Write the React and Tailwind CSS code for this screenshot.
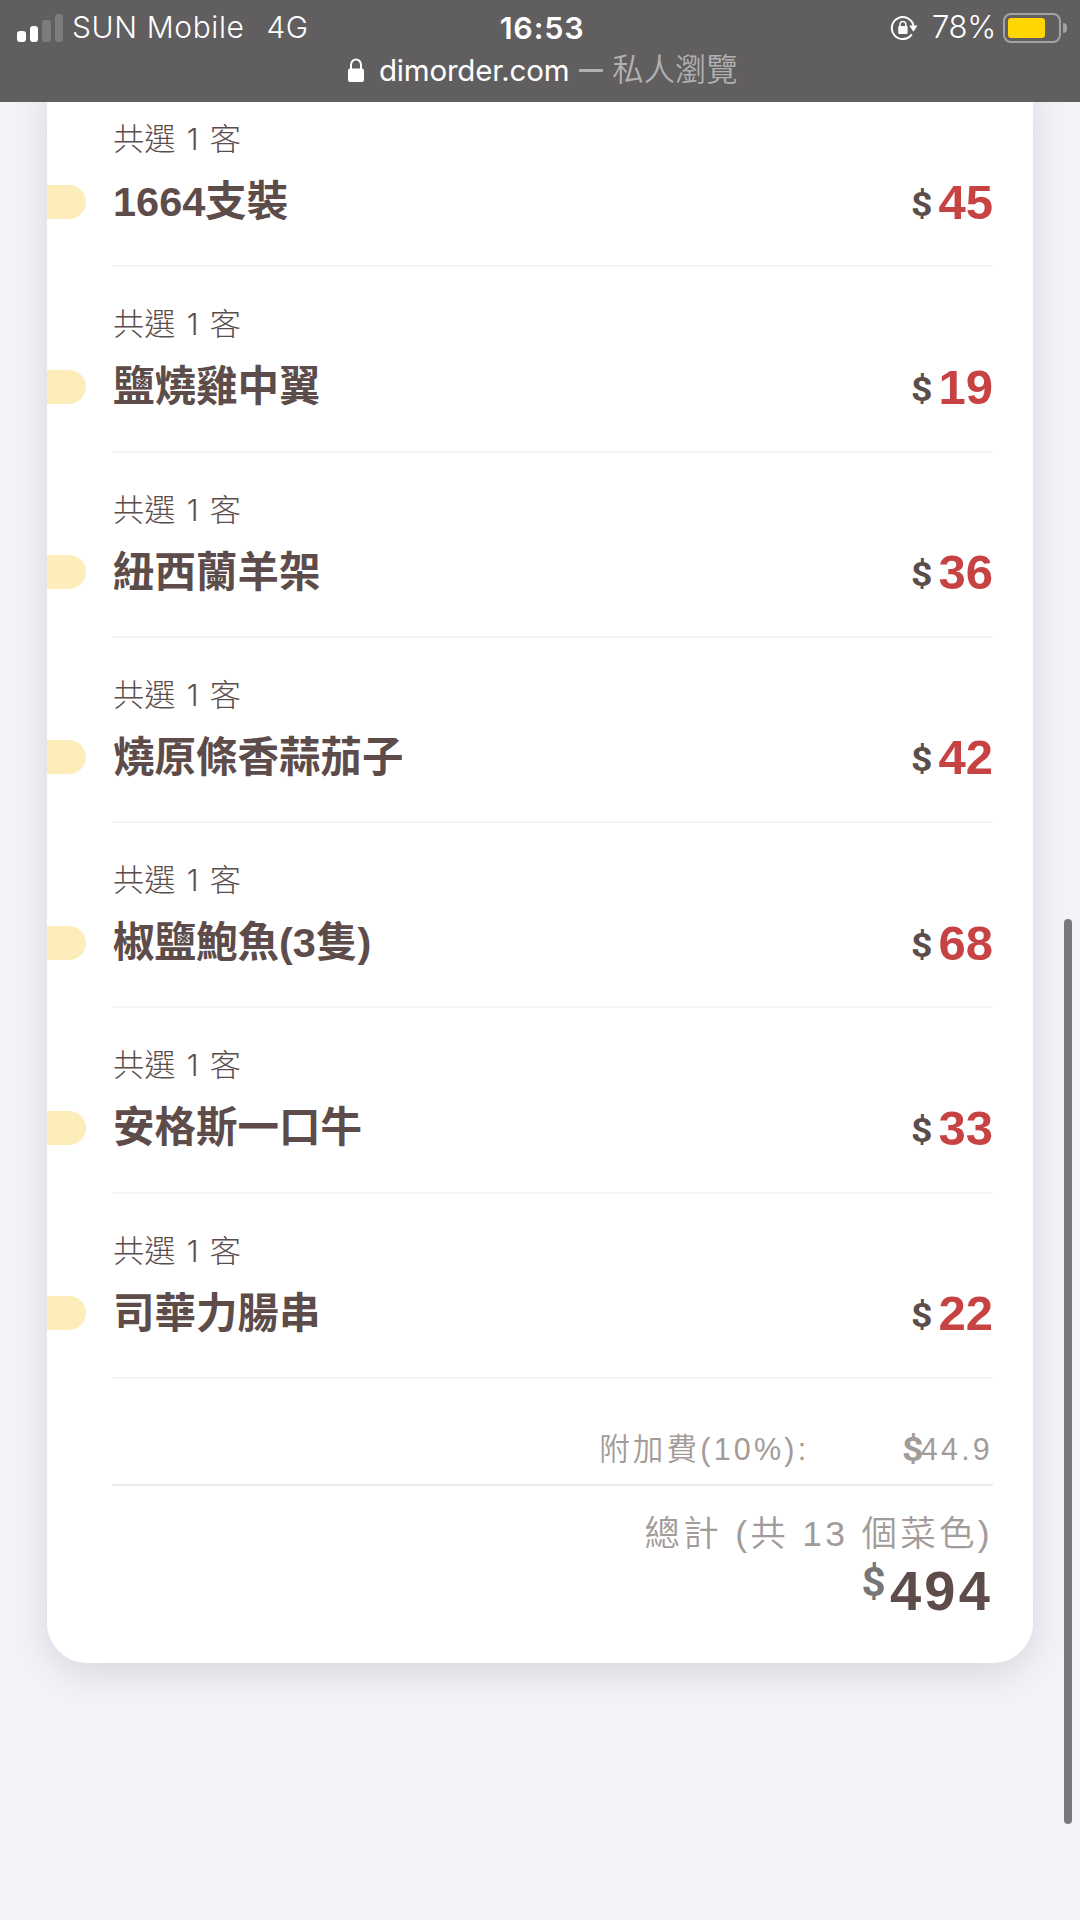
import React from "react";

const items = [
  { name: "1664支裝", price: 45 },
  { name: "鹽燒雞中翼", price: 19 },
  { name: "紐西蘭羊架", price: 36 },
  { name: "燒原條香蒜茄子", price: 42 },
  { name: "椒鹽鮑魚(3隻)", price: 68 },
  { name: "安格斯一口牛", price: 33 },
  { name: "司華力腸串", price: 22 },
];

const SignalBars = () => (
  <div className="flex items-end gap-1 h-7">
    <span className="w-[8.5px] h-[11px] rounded-[3px] bg-white"></span>
    <span className="w-[8.5px] h-4 rounded-[3px] bg-white"></span>
    <span className="w-[8.5px] h-[22px] rounded-[3px] bg-[#7d7c7c]"></span>
    <span className="w-[8.5px] h-7 rounded-[3px] bg-[#7d7c7c]"></span>
  </div>
);

const RotationLock = () => (
  <svg width="28" height="26" viewBox="0 0 28 26" fill="none">
    <path d="M21.8 19.4 A11 11 0 1 1 23.5 10.5" stroke="white" strokeWidth="2" />
    <path d="M19.3 10.5 H27.5 L23.4 16.8 Z" fill="white" />
    <rect x="8.2" y="11" width="9.4" height="8" rx="1.2" fill="white" />
    <path d="M10 11.5 V9.3 a2.9 2.9 0 0 1 5.8 0 V11.5" stroke="white" strokeWidth="1.5" />
  </svg>
);

const PadLock = () => (
  <svg width="16" height="24" viewBox="0 0 16 24" fill="none">
    <rect x="0" y="10.5" width="16" height="13.5" rx="2" fill="white" />
    <path d="M3 11.5 V6.8 a5 5.4 0 0 1 10 0 V11.5" stroke="white" strokeWidth="2" />
  </svg>
);

const Battery = () => (
  <div className="flex items-center gap-[2px]">
    <div className="w-[58px] h-[30px] rounded-[8px] border-2 border-[#a3a2a2] p-[3px]">
      <div className="w-[37px] h-5 rounded-[3px] bg-[#ffd502]"></div>
    </div>
    <div className="w-[4px] h-[10px] rounded-r-full bg-[#a3a2a2]"></div>
  </div>
);

const StatusBar = () => (
  <header className="relative z-10 h-[102px] bg-[#605e5f] text-white font-['Inter','Noto_Sans_CJK_TC',sans-serif]">
    <div className="grid grid-cols-3 items-center h-[55px] pl-[17px] pr-[13px]">
      <div className="flex items-center">
        <SignalBars />
        <span className="ml-[9px] text-[30px] tracking-[0.6px] font-[350] whitespace-pre">SUN Mobile</span>
        <span className="ml-[22px] text-[30px] font-[350] tracking-[0.5px]">4G</span>
      </div>
      <span className="text-center text-[30.5px] font-semibold tracking-[0.8px]">16:53</span>
      <div className="flex items-center justify-end">
        <RotationLock />
        <span className="ml-[14px] mr-[7px] text-[31px] font-[350] tracking-[-0.3px]">78%</span>
        <Battery />
      </div>
    </div>
    <div className="flex items-center h-[30px] pl-[348px] text-[29.5px]">
      <PadLock />
      <span className="ml-[15px] tracking-[-0.2px]">dimorder.com</span>
      <span className="ml-[10px] w-6 h-[3px] bg-[#b1b0b0]"></span>
      <span className="ml-[9px] text-[31.3px] font-[350] text-[#b1b0b0]">私人瀏覽</span>
    </div>
  </header>
);

const OrderRow = ({ name, price }) => (
  <div className="h-[185.3px] pt-[38px]">
    <div className="pl-[66px] h-10 leading-10 text-[31.2px] font-light text-[#5b4d4b]">
      共選 <span className="inline-block w-[17px] text-center text-[30px] font-['Inter',sans-serif]">1</span> 客
    </div>
    <div className="mt-[18px] h-[50px] flex items-center">
      <span className="-mt-[1px] w-[39px] h-[34px] rounded-r-full bg-[#fcedbb]"></span>
      <span className="ml-[27px] text-[41.5px] leading-[50px] font-bold text-[#5d4c4a]">{name}</span>
      <span className="-mt-[1px] ml-auto mr-[40px] flex items-center leading-[50px] font-bold">
        <span className="mr-[7px] mt-[4px] scale-x-110 text-[34px] text-[#5b4d4b] font-['Roboto',sans-serif]">$</span>
        <span className="text-[49px] text-[#c74343]">{price}</span>
      </span>
    </div>
    <div className="mt-[38.3px] ml-[65px] mr-[40px] h-[2px] bg-[#f4f4f4]"></div>
  </div>
);

const App = () => {
  return (
    <div className="relative h-[1920px] overflow-hidden bg-[#f4f3f9] font-['Liberation_Sans','Noto_Sans_CJK_TC',sans-serif]">
      <StatusBar />

      <main className="-mt-[21px] ml-[47px] mr-[47px] h-[1582px] rounded-b-[40px] bg-white shadow-[0_10px_40px_rgba(0,0,0,0.12)]">
        {items.map((item) => (
          <OrderRow key={item.name} name={item.name} price={item.price} />
        ))}

        {/* Surcharge */}
        <div className="ml-[65px] mr-[40px] h-[108px] pt-[51px] border-b-2 border-[#e9e9e9] flex justify-end text-[30.5px] leading-10 tracking-[3.2px] text-[#a39b98]">
          <span className="font-[350]">附加費(10%):</span>
          <span className="ml-[94px] -mr-[2px] scale-x-110 font-bold tracking-normal font-['Roboto',sans-serif] text-[34px]">$</span>
          <span>44.9</span>
        </div>

        {/* Total */}
        <div className="mr-[40px] pt-[24px] text-right text-[#a39b98]">
          <div className="h-12 leading-[48px] text-[35.5px] font-[350] tracking-[3.3px]">總計 (共 13 個菜色)</div>
          <div className="flex justify-end h-[62px] leading-[64px] font-bold">
            <span className="mr-[5px] -mt-[7px] scale-x-105 text-[40px] text-[#777777] font-['Roboto',sans-serif]">$</span>
            <span className="mt-[1px] text-[56px] tracking-[3.2px] text-[#5d4c4a]">494</span>
          </div>
        </div>
      </main>

      {/* Scroll indicator */}
      <div className="absolute right-2 top-[919px] w-2 h-[905px] rounded-full bg-[#79797b]"></div>
    </div>
  );
};

export default App;
